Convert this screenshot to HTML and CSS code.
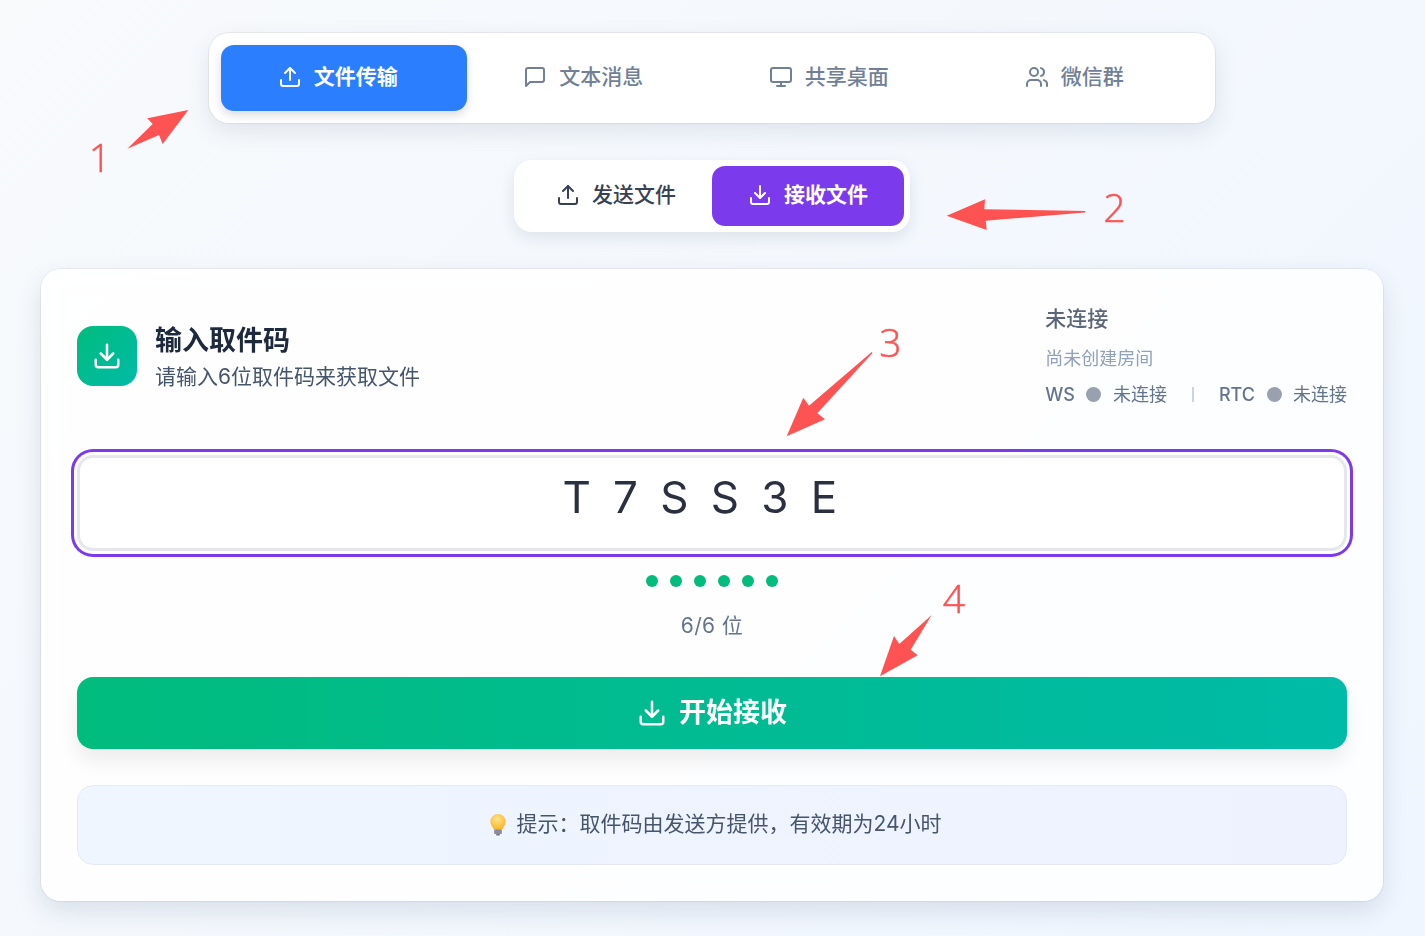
FILE: index.html
```html
<!DOCTYPE html>
<html lang="zh-CN">
<head>
  <meta charset="UTF-8" />
  <meta name="viewport" content="width=device-width, initial-scale=1.0"/>
  <title>文件传输</title>
  <link rel="stylesheet" href="styles.css">
</head>
<body>

  <!-- icon set -->
  <svg class="sprite" aria-hidden="true">
    <symbol id="i-upload" viewBox="0 0 24 24"><path d="M21 15v4a2 2 0 0 1-2 2H5a2 2 0 0 1-2-2v-4"/><path d="M17 8l-5-5-5 5"/><path d="M12 3v12"/></symbol>
    <symbol id="i-download" viewBox="0 0 24 24"><path d="M21 15v4a2 2 0 0 1-2 2H5a2 2 0 0 1-2-2v-4"/><path d="M7 10l5 5 5-5"/><path d="M12 15V3"/></symbol>
    <symbol id="i-message" viewBox="0 0 24 24"><path d="M21 15a2 2 0 0 1-2 2H7l-4 4V5a2 2 0 0 1 2-2h14a2 2 0 0 1 2 2z"/></symbol>
    <symbol id="i-monitor" viewBox="0 0 24 24"><rect x="2" y="3" width="20" height="14" rx="2"/><path d="M8 21h8"/><path d="M12 17v4"/></symbol>
    <symbol id="i-users" viewBox="0 0 24 24"><path d="M16 21v-2a4 4 0 0 0-4-4H6a4 4 0 0 0-4 4v2"/><circle cx="9" cy="7" r="4"/><path d="M22 21v-2a4 4 0 0 0-3-3.87"/><path d="M16 3.13a4 4 0 0 1 0 7.75"/></symbol>
  </svg>

  <div class="page">
    <!-- Main tabs -->
    <nav class="main-tabs">
      <button class="main-tab active"><svg class="icon"><use href="#i-upload"/></svg>文件传输</button>
      <button class="main-tab"><svg class="icon"><use href="#i-message"/></svg>文本消息</button>
      <button class="main-tab"><svg class="icon"><use href="#i-monitor"/></svg>共享桌面</button>
      <button class="main-tab"><svg class="icon"><use href="#i-users"/></svg>微信群</button>
    </nav>

    <!-- Send / receive -->
    <div class="mode-tabs">
      <button class="mode-tab"><svg class="icon"><use href="#i-upload"/></svg>发送文件</button>
      <button class="mode-tab active"><svg class="icon"><use href="#i-download"/></svg>接收文件</button>
    </div>

    <div class="card">
      <div class="card-header">
        <div class="card-title">
          <div class="title-icon"><svg class="icon icon-lg"><use href="#i-download"/></svg></div>
          <div class="title-text">
            <h2>输入取件码</h2>
            <p>请输入6位取件码来获取文件</p>
          </div>
        </div>
        <div class="status">
          <div class="status-title">未连接</div>
          <div class="status-sub">尚未创建房间</div>
          <div class="status-row">
            <span class="status-item"><b>WS</b><i class="dot"></i><span>未连接</span></span>
            <i class="status-sep"></i>
            <span class="status-item"><b>RTC</b><i class="dot"></i><span>未连接</span></span>
          </div>
        </div>
      </div>

      <div class="code-input">T7SS3E</div>

      <div class="code-dots">
        <i></i><i></i><i></i><i></i><i></i><i></i>
      </div>
      <div class="code-count">6/6 位</div>

      <button class="start-btn"><svg class="icon icon-lg"><use href="#i-download"/></svg>开始接收</button>

      <div class="tip">
        <svg class="bulb" viewBox="0 0 18 24">
          <defs>
            <radialGradient id="bulbGlow" cx="45%" cy="35%" r="65%">
              <stop offset="0" stop-color="#ffe48a"/>
              <stop offset="1" stop-color="#fbb52c"/>
            </radialGradient>
          </defs>
          <path d="M9 1a8 8 0 0 0-8 8c0 3.4 2.6 5 3.3 8h9.4c.7-3 3.3-4.6 3.3-8a8 8 0 0 0-8-8z" fill="url(#bulbGlow)"/>
          <rect x="5" y="17" width="8" height="5" rx="1" fill="#8f8a9e"/>
          <rect x="7" y="22" width="4" height="1.6" rx=".8" fill="#6f6a80"/>
        </svg>
        <span>提示：取件码由发送方提供，有效期为24小时</span>
      </div>
    </div>
  </div>

  <!-- Red notes drawn on top of the screenshot -->
  <svg class="notes" viewBox="0 0 1425 936" aria-hidden="true">
    <polygon points="188.3,110 147.3,118.3 152.7,124 127.3,148.7 159,135 162.7,144"/>
    <polygon points="946.7,215.7 985,199.3 984.3,209.3 1085,211 1085,212.5 985.7,220.7 986.7,230"/>
    <polygon points="871.7,352 809,405.7 803.3,397.7 786.7,436.3 825,419.3 817.3,413.3 872.5,353"/>
    <polygon points="931.7,615 899.3,644 894,636 880,676.3 917.7,655.3 910.7,649.7"/>
    <text x="100" y="172">1</text>
    <text x="1114.5" y="222">2</text>
    <text x="890.5" y="357">3</text>
    <text x="954" y="613">4</text>
  </svg>

</body>
</html>
```

FILE: styles.css
```css
* {
  box-sizing: border-box;
  padding: 0;
  margin: 0;
  font-family: Inter, 'Noto Sans CJK SC', sans-serif;
}

body {
  position: relative;
  min-height: 936px;
  padding: 33px 42px 0 41px;
  background-image: linear-gradient(135deg, #f8fafc 0%, #eff6ff 100%);
  color: #1d293d;
  overflow: hidden;
}

.sprite {
  display: none;
}

.icon {
  width: 24px;
  height: 24px;
  fill: none;
  stroke: currentColor;
  stroke-width: 2;
  stroke-linecap: round;
  stroke-linejoin: round;
  flex-shrink: 0;
}

.icon-lg {
  width: 30px;
  height: 30px;
}

.page {
  display: flex;
  flex-direction: column;
  align-items: center;
}

button {
  border: none;
  background: none;
  cursor: pointer;
}

/* main tabs */
.main-tabs {
  width: 1006px;
  padding: 12px;
  display: grid;
  grid-template-columns: repeat(4, 1fr);
  background: #fff;
  border-radius: 20px;
  box-shadow: 0 0 0 1px rgba(0, 0, 0, 0.05), 0 8px 24px rgba(15, 40, 80, 0.1);
}

.main-tab {
  height: 66px;
  padding: 0 12px 2px 0;
  display: flex;
  justify-content: center;
  align-items: center;
  gap: 12px;
  border-radius: 13px;
  color: #718096;
  font-size: 21px;
  line-height: 28px;
  font-weight: 500;
}

.main-tab.active {
  background: #2b7fff;
  color: #fff;
  font-weight: 700;
  box-shadow: 0 4px 10px rgba(0, 0, 0, 0.14);
}

/* send / receive */
.mode-tabs {
  margin-top: 37px;
  padding: 6px;
  display: flex;
  background: #fff;
  border-radius: 18px;
  box-shadow: 0 6px 16px rgba(15, 40, 80, 0.1);
}

.mode-tab {
  width: 192px;
  height: 60px;
  padding-bottom: 2px;
  display: flex;
  justify-content: center;
  align-items: center;
  gap: 12px;
  border-radius: 13px;
  color: #374151;
  font-size: 21px;
  line-height: 28px;
  font-weight: 500;
}

.mode-tab.active {
  background: #7c3aed;
  color: #fff;
  font-weight: 700;
}

/* card */
.card {
  width: 100%;
  margin-top: 37px;
  padding: 36px;
  background: rgba(255, 255, 255, 0.85);
  backdrop-filter: blur(10px);
  border-radius: 20px;
  box-shadow: 0 0 0 1px rgba(0, 0, 0, 0.05), 0 10px 26px rgba(15, 40, 80, 0.12);
}

.card-header {
  height: 102px;
  display: flex;
  justify-content: space-between;
  align-items: center;
}

.card-title {
  display: flex;
  align-items: center;
  gap: 18px;
}

.title-icon {
  width: 60px;
  height: 60px;
  display: flex;
  justify-content: center;
  align-items: center;
  border-radius: 16px;
  background: linear-gradient(135deg, #00bc7d, #00bba7);
  color: #fff;
}

.title-text {
  padding-top: 5px;
}

h2 {
  font-size: 27px;
  line-height: 34px;
  font-weight: 700;
  color: #1d293d;
}

.title-text p {
  margin-top: 2px;
  font-size: 21px;
  line-height: 34px;
  color: #45556c;
}

.status-title {
  font-size: 21px;
  line-height: 28px;
  font-weight: 500;
  color: #5a6575;
}

.status-sub {
  margin-top: 12px;
  font-size: 18px;
  line-height: 28px;
  color: #90a1b9;
}

.status-row {
  margin-top: 8px;
  display: flex;
  align-items: center;
  gap: 25px;
  font-size: 18px;
  line-height: 27px;
  color: #62748e;
}

.status-item {
  display: flex;
  align-items: center;
  gap: 11.5px;
}

.status-item b {
  font-weight: 500;
}

.status-sep {
  width: 2px;
  height: 15px;
  background: #cad5e2;
}

.dot {
  width: 15px;
  height: 15px;
  border-radius: 50%;
  background: #99a1af;
}

/* code input */
.code-input {
  height: 96px;
  margin-top: 48px;
  padding: 0 2px 12px 0;
  display: flex;
  justify-content: center;
  align-items: center;
  background: #fff;
  border: 3px solid #e5e7eb;
  border-radius: 16px;
  box-shadow: 0 0 0 3px #fff, 0 0 0 6px #7c3aed;
  font-size: 44px;
  font-kerning: none;
  letter-spacing: 22.3px;
  color: #2b3040;
}

.code-dots {
  margin-top: 24px;
  display: flex;
  justify-content: center;
  gap: 12px;
}

.code-dots i {
  width: 12px;
  height: 12px;
  border-radius: 50%;
  background: #00bc7d;
}

.code-count {
  margin-top: 23px;
  text-align: center;
  font-size: 21px;
  line-height: 32px;
  letter-spacing: 0.4px;
  color: #62748e;
}

.start-btn {
  width: 100%;
  height: 72px;
  margin-top: 35px;
  display: flex;
  justify-content: center;
  align-items: center;
  gap: 12px;
  border-radius: 16px;
  background: linear-gradient(90deg, #00bc7d, #00bba7);
  color: #fff;
  font-size: 27px;
  line-height: 34px;
  font-weight: 700;
  box-shadow: 0 12px 20px rgba(0, 0, 0, 0.07);
}

.tip {
  height: 80px;
  margin-top: 36px;
  padding: 0 0 2px 5px;
  display: flex;
  justify-content: center;
  align-items: center;
  gap: 9px;
  background: linear-gradient(90deg, #eff6ff, #eef2ff);
  border: 1px solid #e5e9f2;
  border-radius: 16px;
  font-size: 21px;
  line-height: 28px;
  color: #45556c;
}

.bulb {
  width: 18px;
  height: 23px;
  margin-left: 2px;
}

/* annotations */
.notes {
  position: absolute;
  top: 0;
  left: 0;
  width: 1425px;
  height: 936px;
  pointer-events: none;
}

.notes polygon {
  fill: #ff5252;
}

.notes text {
  fill: #ff5252;
  stroke: #ff5252;
  stroke-width: 0.5;
  font-family: 'Open Sans', sans-serif;
  font-weight: 300;
  font-size: 39px;
  text-anchor: middle;
}
```
